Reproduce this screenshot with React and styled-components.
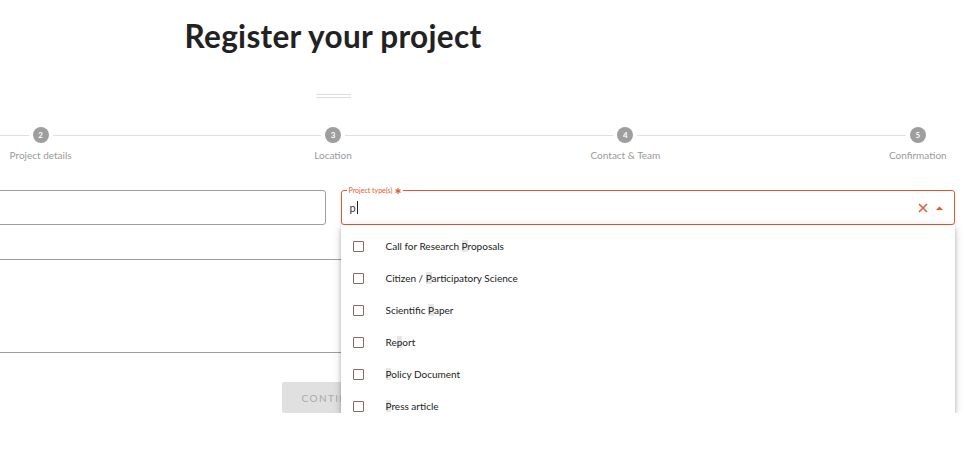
import React from "react";
import styled, { createGlobalStyle } from "styled-components";

const Global = createGlobalStyle`
  html, body { margin: 0; padding: 0; overflow: hidden; background: #fff; }
  body { font-family: Lato, "Open Sans", sans-serif; color: #222; }
`;

const ORANGE = "#e4572e";

const Page = styled.div`
  width: 1462px;
  margin-left: -398px;
  display: flex;
  flex-direction: column;
  align-items: center;
`;

const Title = styled.h1`
  margin: 18px 0 0;
  font-size: 31.5px;
  line-height: 37px;
  font-weight: 700;
  color: #222;
  letter-spacing: 0.3px;
`;

const Divider = styled.div`
  width: 35px;
  height: 2px;
  margin-top: 39px;
  border-top: 1px solid #ddd;
  border-bottom: 1px solid #ddd;
`;

const Stepper = styled.div`
  width: 100%;
  display: flex;
  margin-top: 29px;
`;

const Step = styled.div`
  flex: 1;
  display: flex;
  flex-direction: column;
  align-items: center;
`;

const StepHead = styled.div`
  width: 100%;
  display: flex;
  align-items: center;
`;

const Connector = styled.div`
  flex: 1;
  height: 1px;
  background: ${(p) => (p.$hidden ? "transparent" : "#e0e0e0")};
  margin: ${(p) => (p.$side === "left" ? "0 4px 0 0" : "0 0 0 4px")};
`;

const Circle = styled.div`
  width: 16px;
  height: 16px;
  border-radius: 50%;
  background: #9e9e9e;
  color: #fff;
  font-size: 8px;
  font-weight: 700;
  display: flex;
  align-items: center;
  justify-content: center;
`;

const StepLabel = styled.div`
  margin-top: 5px;
  font-size: 10px;
  line-height: 14px;
  color: #9a9a9a;
  white-space: nowrap;
`;

const Form = styled.div`
  width: 1243px;
  margin-top: 28px;
  display: grid;
  grid-template-columns: 1fr 1fr;
  column-gap: 15px;
`;

const Outlined = styled.div`
  position: relative;
  height: 35px;
  box-sizing: border-box;
  border: 1px solid ${(p) => (p.$active ? ORANGE : "#9e9e9e")};
  border-radius: 3px;
  display: flex;
  align-items: center;
  padding: 0 10px 0 8px;
`;

const Legend = styled.div`
  position: absolute;
  top: -5px;
  left: 5px;
  padding: 0 2px;
  background: #fff;
  font-size: 7px;
  line-height: 9px;
  color: ${ORANGE};
  display: flex;
  align-items: center;
  gap: 3px;
`;

const InputText = styled.div`
  flex: 1;
  font-size: 11px;
  color: #333;
  display: flex;
  align-items: center;
`;

const Caret = styled.span`
  display: inline-block;
  width: 1px;
  height: 13px;
  background: #222;
  margin-left: 1px;
`;

const Adornments = styled.div`
  display: flex;
  align-items: center;
  gap: 8px;
  margin-right: 1px;
`;

const Underlined = styled.div`
  grid-column: 1 / 3;
  height: ${(p) => p.$h}px;
  border-bottom: 1px solid #9e9e9e;
`;

const ButtonRow = styled.div`
  width: 100%;
  display: flex;
  justify-content: center;
  margin-top: 29px;
`;

const Button = styled.div`
  width: 102px;
  height: 31px;
  background: #e0e0e0;
  border-radius: 2px;
  color: #aaa;
  font-size: 10px;
  letter-spacing: 1.4px;
  display: flex;
  align-items: center;
  justify-content: center;
`;

const Dropdown = styled.ul`
  position: absolute;
  top: calc(100% + 1px);
  left: -1px;
  right: -1px;
  margin: 0;
  padding: 5px 0 0;
  list-style: none;
  background: #fff;
  height: 185px;
  overflow: hidden;
  z-index: 5;
  box-shadow: 0 2px 4px -1px rgba(0, 0, 0, 0.2), 0 4px 5px 0 rgba(0, 0, 0, 0.14),
    0 1px 10px 0 rgba(0, 0, 0, 0.12);
`;

const Option = styled.li`
  height: 32px;
  display: flex;
  align-items: center;
  padding-left: 12px;
  font-size: 10px;
  color: #222;
`;

const Check = styled.span`
  width: 9px;
  height: 9px;
  border: 1.5px solid #7e6d66;
  border-radius: 1px;
  margin-right: 22px;
  flex: none;
`;

const Mark = styled.span`
  background: #e6e6e6;
`;

const options = [
  ["Call for Research ", "P", "roposals"],
  ["Citizen / ", "P", "articipatory Science"],
  ["Scientific ", "P", "aper"],
  ["Re", "p", "ort"],
  ["", "P", "olicy Document"],
  ["", "P", "ress article"],
];

const steps = ["Project information", "Project details", "Location", "Contact & Team", "Confirmation"];

export default function App() {
  return (
    <>
      <Global />
      <Page>
        <Title>Register your project</Title>
        <Divider />
        <Stepper>
          {steps.map((s, i) => (
            <Step key={s}>
              <StepHead>
                <Connector $side="left" $hidden={i === 0} />
                <Circle>{i + 1}</Circle>
                <Connector $side="right" $hidden={i === steps.length - 1} />
              </StepHead>
              <StepLabel>{s}</StepLabel>
            </Step>
          ))}
        </Stepper>
        <Form>
          <Outlined />
          <Outlined $active>
            <Legend>
              Project type(s)
              <svg width="6" height="6" viewBox="0 0 10 10">
                <g stroke={ORANGE} strokeWidth="2" strokeLinecap="round">
                  <line x1="5" y1="1" x2="5" y2="9" />
                  <line x1="1.5" y1="3" x2="8.5" y2="7" />
                  <line x1="1.5" y1="7" x2="8.5" y2="3" />
                </g>
              </svg>
            </Legend>
            <InputText>
              p<Caret />
            </InputText>
            <Adornments>
              <svg width="10" height="10" viewBox="0 0 10 10">
                <path d="M1 1L9 9M9 1L1 9" stroke={ORANGE} strokeWidth="1.5" />
              </svg>
              <svg width="7" height="4" viewBox="0 0 7 4">
                <path d="M0 4L3.5 0.5L7 4Z" fill={ORANGE} />
              </svg>
            </Adornments>
            <Dropdown>
              {options.map(([a, m, b], i) => (
                <Option key={i}>
                  <Check />
                  <span>
                    {a}
                    <Mark>{m}</Mark>
                    {b}
                  </span>
                </Option>
              ))}
            </Dropdown>
          </Outlined>
          <Underlined $h={34} />
          <Underlined $h={92} />
        </Form>
        <ButtonRow>
          <Button>CONTINUE</Button>
        </ButtonRow>
      </Page>
    </>
  );
}
